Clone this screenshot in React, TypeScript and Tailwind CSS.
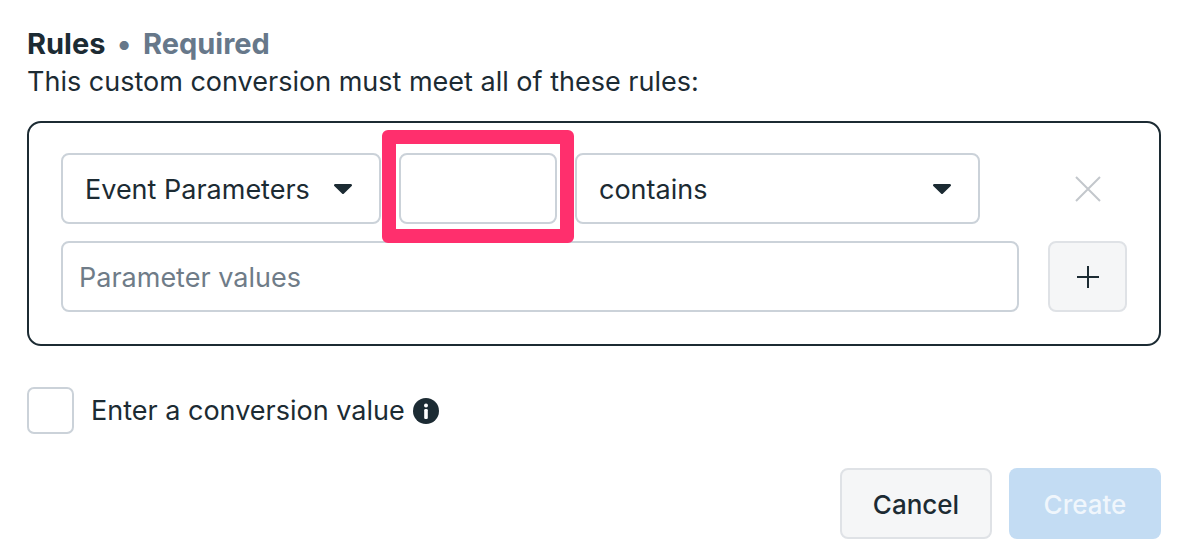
import React from "react";

const Caret = () => (
  <svg width="20" height="12" viewBox="0 0 20 12" className="shrink-0">
    <path d="M2.2 1h15.6a1.2 1.2 0 0 1 .9 2L11 10.6a1.4 1.4 0 0 1-2 0L1.3 3a1.2 1.2 0 0 1 .9-2z" fill="#1c2b33" />
  </svg>
);

const Close = () => (
  <svg width="26" height="26" viewBox="0 0 26 26">
    <path d="M1 1L25 25M25 1L1 25" stroke="#c3c7cc" strokeWidth="2" />
  </svg>
);

const Plus = () => (
  <svg width="24" height="24" viewBox="0 0 24 24">
    <path d="M12 1v22M1 12h22" stroke="#1c2b33" strokeWidth="2" />
  </svg>
);

const Info = () => (
  <svg width="26" height="26" viewBox="0 0 26 26">
    <circle cx="13" cy="13" r="13" fill="#1c2b33" />
    <circle cx="13" cy="7.6" r="2" fill="#fff" />
    <rect x="11.2" y="11" width="3.6" height="10" rx="1.2" fill="#fff" />
  </svg>
);

export default function App() {
  return (
    <div
      className="w-[1188px] h-[552px] bg-white px-[27px] pt-[26px] text-[#1c2b33] overflow-hidden"
      style={{ fontFamily: "Inter, 'Noto Sans', sans-serif" }}
    >
      <div className="text-[29px] leading-[36px] font-bold">
        Rules <span className="text-[#67788a] mx-[5px]">•</span>{" "}
        <span className="text-[#67788a]">Required</span>
      </div>
      <div className="text-[27px] leading-[40px]">This custom conversion must meet all of these rules:</div>

      <div className="mt-[19px] border-2 border-[#1c2b33] rounded-[14px] px-[32px] pt-[30px] pb-[32px] flex flex-col gap-[17px]">
        <div className="flex items-center">
          <div className="w-[320px] h-[71px] border-2 border-[#cbd2d9] rounded-[8px] flex items-center justify-between pl-[22px] pr-[26px] text-[27px]">
            <span className="pt-[3px]">Event Parameters</span>
            <Caret />
          </div>
          <div className="relative ml-[18px] w-[158px] h-[71px]">
            <div className="w-full h-full border-2 border-[#cbd2d9] rounded-[8px]" />
            <div className="absolute left-[-17px] right-[-17px] top-[-23px] bottom-[-19px] border-[14px] border-[#ff2f6d] rounded-[6px]" />
          </div>
          <div className="ml-[18px] w-[405px] h-[71px] border-2 border-[#cbd2d9] rounded-[8px] flex items-center justify-between pl-[22px] pr-[26px] text-[27px]">
            <span className="pt-[3px]">contains</span>
            <Caret />
          </div>
          <div className="ml-[68px] w-[79px] flex justify-center">
            <Close />
          </div>
        </div>
        <div className="flex items-center gap-[29px]">
          <div className="flex-1 h-[71px] border-2 border-[#cbd2d9] rounded-[8px] flex items-center pl-[16px] pt-[3px] text-[27px] text-[#6f7c88]">
            Parameter values
          </div>
          <div className="w-[79px] h-[71px] border-2 border-[#dfe2e6] bg-[#f5f6f7] rounded-[8px] flex items-center justify-center">
            <Plus />
          </div>
        </div>
      </div>

      <div className="mt-[41px] flex items-center">
        <div className="w-[47px] h-[47px] border-2 border-[#cbd2d9] rounded-[7px]" />
        <span className="ml-[17px] pt-[2px] text-[27px]">Enter a conversion value</span>
        <span className="ml-[8px] flex">
          <Info />
        </span>
      </div>

      <div className="mt-[34px] flex justify-end gap-[17px]">
        <div className="w-[152px] h-[71px] border-2 border-[#dfe2e6] bg-[#f5f6f7] rounded-[8px] flex items-center justify-center pt-[2px] text-[26px] font-medium">
          Cancel
        </div>
        <div className="w-[152px] h-[71px] bg-[#c3dcf3] rounded-[8px] flex items-center justify-center pt-[2px] text-[26px] font-medium text-white/75">
          Create
        </div>
      </div>
    </div>
  );
}
